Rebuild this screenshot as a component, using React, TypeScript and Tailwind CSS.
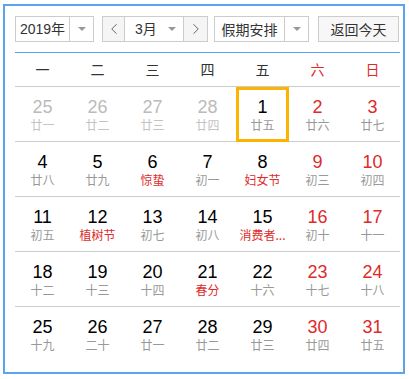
import { ChevronLeft, ChevronRight } from 'lucide-react';

type Day = { n: number; sub: string; muted?: boolean; red?: boolean; subRed?: boolean; today?: boolean };

const weekdays = ['一', '二', '三', '四', '五', '六', '日'];

const rows: Day[][] = [
    [
        { n: 25, sub: '廿一', muted: true },
        { n: 26, sub: '廿二', muted: true },
        { n: 27, sub: '廿三', muted: true },
        { n: 28, sub: '廿四', muted: true },
        { n: 1, sub: '廿五', today: true },
        { n: 2, sub: '廿六', red: true },
        { n: 3, sub: '廿七', red: true },
    ],
    [
        { n: 4, sub: '廿八' },
        { n: 5, sub: '廿九' },
        { n: 6, sub: '惊蛰', subRed: true },
        { n: 7, sub: '初一' },
        { n: 8, sub: '妇女节', subRed: true },
        { n: 9, sub: '初三', red: true },
        { n: 10, sub: '初四', red: true },
    ],
    [
        { n: 11, sub: '初五' },
        { n: 12, sub: '植树节', subRed: true },
        { n: 13, sub: '初七' },
        { n: 14, sub: '初八' },
        { n: 15, sub: '消费者...', subRed: true },
        { n: 16, sub: '初十', red: true },
        { n: 17, sub: '十一', red: true },
    ],
    [
        { n: 18, sub: '十二' },
        { n: 19, sub: '十三' },
        { n: 20, sub: '十四' },
        { n: 21, sub: '春分', subRed: true },
        { n: 22, sub: '十六' },
        { n: 23, sub: '十七', red: true },
        { n: 24, sub: '十八', red: true },
    ],
    [
        { n: 25, sub: '十九' },
        { n: 26, sub: '二十' },
        { n: 27, sub: '廿一' },
        { n: 28, sub: '廿二' },
        { n: 29, sub: '廿三' },
        { n: 30, sub: '廿四', red: true },
        { n: 31, sub: '廿五', red: true },
    ],
];

function Caret() {
    return <span className="h-0 w-0 border-x-[4px] border-t-[4px] border-x-transparent border-t-[#999]" />;
}

function DayCell({ d }: { d: Day }) {
    const numColor = d.muted ? 'text-[#bbbbbb]' : d.red ? 'text-[#e02a2a]' : 'text-black';
    const subColor = d.muted ? 'text-[#c4c4c4]' : d.subRed ? 'text-[#e02a2a]' : 'text-[#999999]';
    return (
        <div className="relative flex h-[55px] flex-col items-center border-t border-[#cccccc] pt-[10px]">
            {d.today && <div className="absolute top-0 right-px bottom-[-1px] left-px z-10 border-[3px] border-[#fcb400]"></div>}
            <span className={`font-['Liberation_Sans',Arial,sans-serif] text-[18px] leading-[20px] ${numColor}`}>{d.n}</span>
            <span className={`mt-px text-[12px] leading-[14px] ${subColor}`}>{d.sub}</span>
        </div>
    );
}

export default function App() {
    return (
        <div className="min-h-screen bg-white pt-[4px] pl-[3px] font-['Noto_Sans_CJK_SC','Liberation_Sans',sans-serif]">
            <div className="w-[402px] border-2 border-[#5aa4f2] pt-[10px] pb-[11px] pl-[10px]">
                <div className="w-[385px]">
                    <div className="flex h-[26px] items-stretch text-[14px] text-[#333]">
                        <div className="flex w-[79px] border border-[#cccccc] bg-white">
                            <div className="flex w-[54px] items-center justify-center border-r border-[#cccccc] font-['Liberation_Sans','Noto_Sans_CJK_SC',sans-serif]">
                                2019年
                            </div>
                            <div className="flex flex-1 items-center justify-center">
                                <Caret />
                            </div>
                        </div>
                        <div className="ml-[8px] flex w-[106px] border border-[#cccccc]">
                            <div className="flex w-[22px] items-center justify-center border-r border-[#cccccc] bg-[#f5f5f5]">
                                <ChevronLeft className="h-[18px] w-[18px] text-[#555]" strokeWidth={1.2} />
                            </div>
                            <div className="flex w-[59px] items-center border-r border-[#cccccc] bg-white pl-[10px] pr-[7px]">
                                <span className="flex-1 font-['Liberation_Sans','Noto_Sans_CJK_SC',sans-serif]">3月</span>
                                <Caret />
                            </div>
                            <div className="flex flex-1 items-center justify-center bg-[#f5f5f5]">
                                <ChevronRight className="h-[18px] w-[18px] text-[#555]" strokeWidth={1.2} />
                            </div>
                        </div>
                        <div className="ml-[6px] flex w-[95px] border border-[#cccccc] bg-white">
                            <div className="flex w-[70px] items-center justify-center border-r border-[#cccccc]">假期安排</div>
                            <div className="flex flex-1 items-center justify-center">
                                <Caret />
                            </div>
                        </div>
                        <div className="ml-[9px] flex w-[81px] items-center justify-center border border-[#cccccc] bg-[#f7f7f7]">
                            返回今天
                        </div>
                    </div>
                    <div className="mt-[10px] h-px bg-[#5aa4f2]"></div>
                    <div className="grid h-[33px] grid-cols-7 items-center text-center text-[14px]">
                        {weekdays.map((w, i) => (
                            <span key={w} className={i >= 5 ? 'text-[#e02a2a]' : 'text-[#333]'}>
                                {w}
                            </span>
                        ))}
                    </div>
                    {rows.map((row, ri) => (
                        <div key={ri} className="grid grid-cols-7">
                            {row.map((d, di) => (
                                <DayCell key={di} d={d} />
                            ))}
                        </div>
                    ))}
                </div>
            </div>
        </div>
    );
}
